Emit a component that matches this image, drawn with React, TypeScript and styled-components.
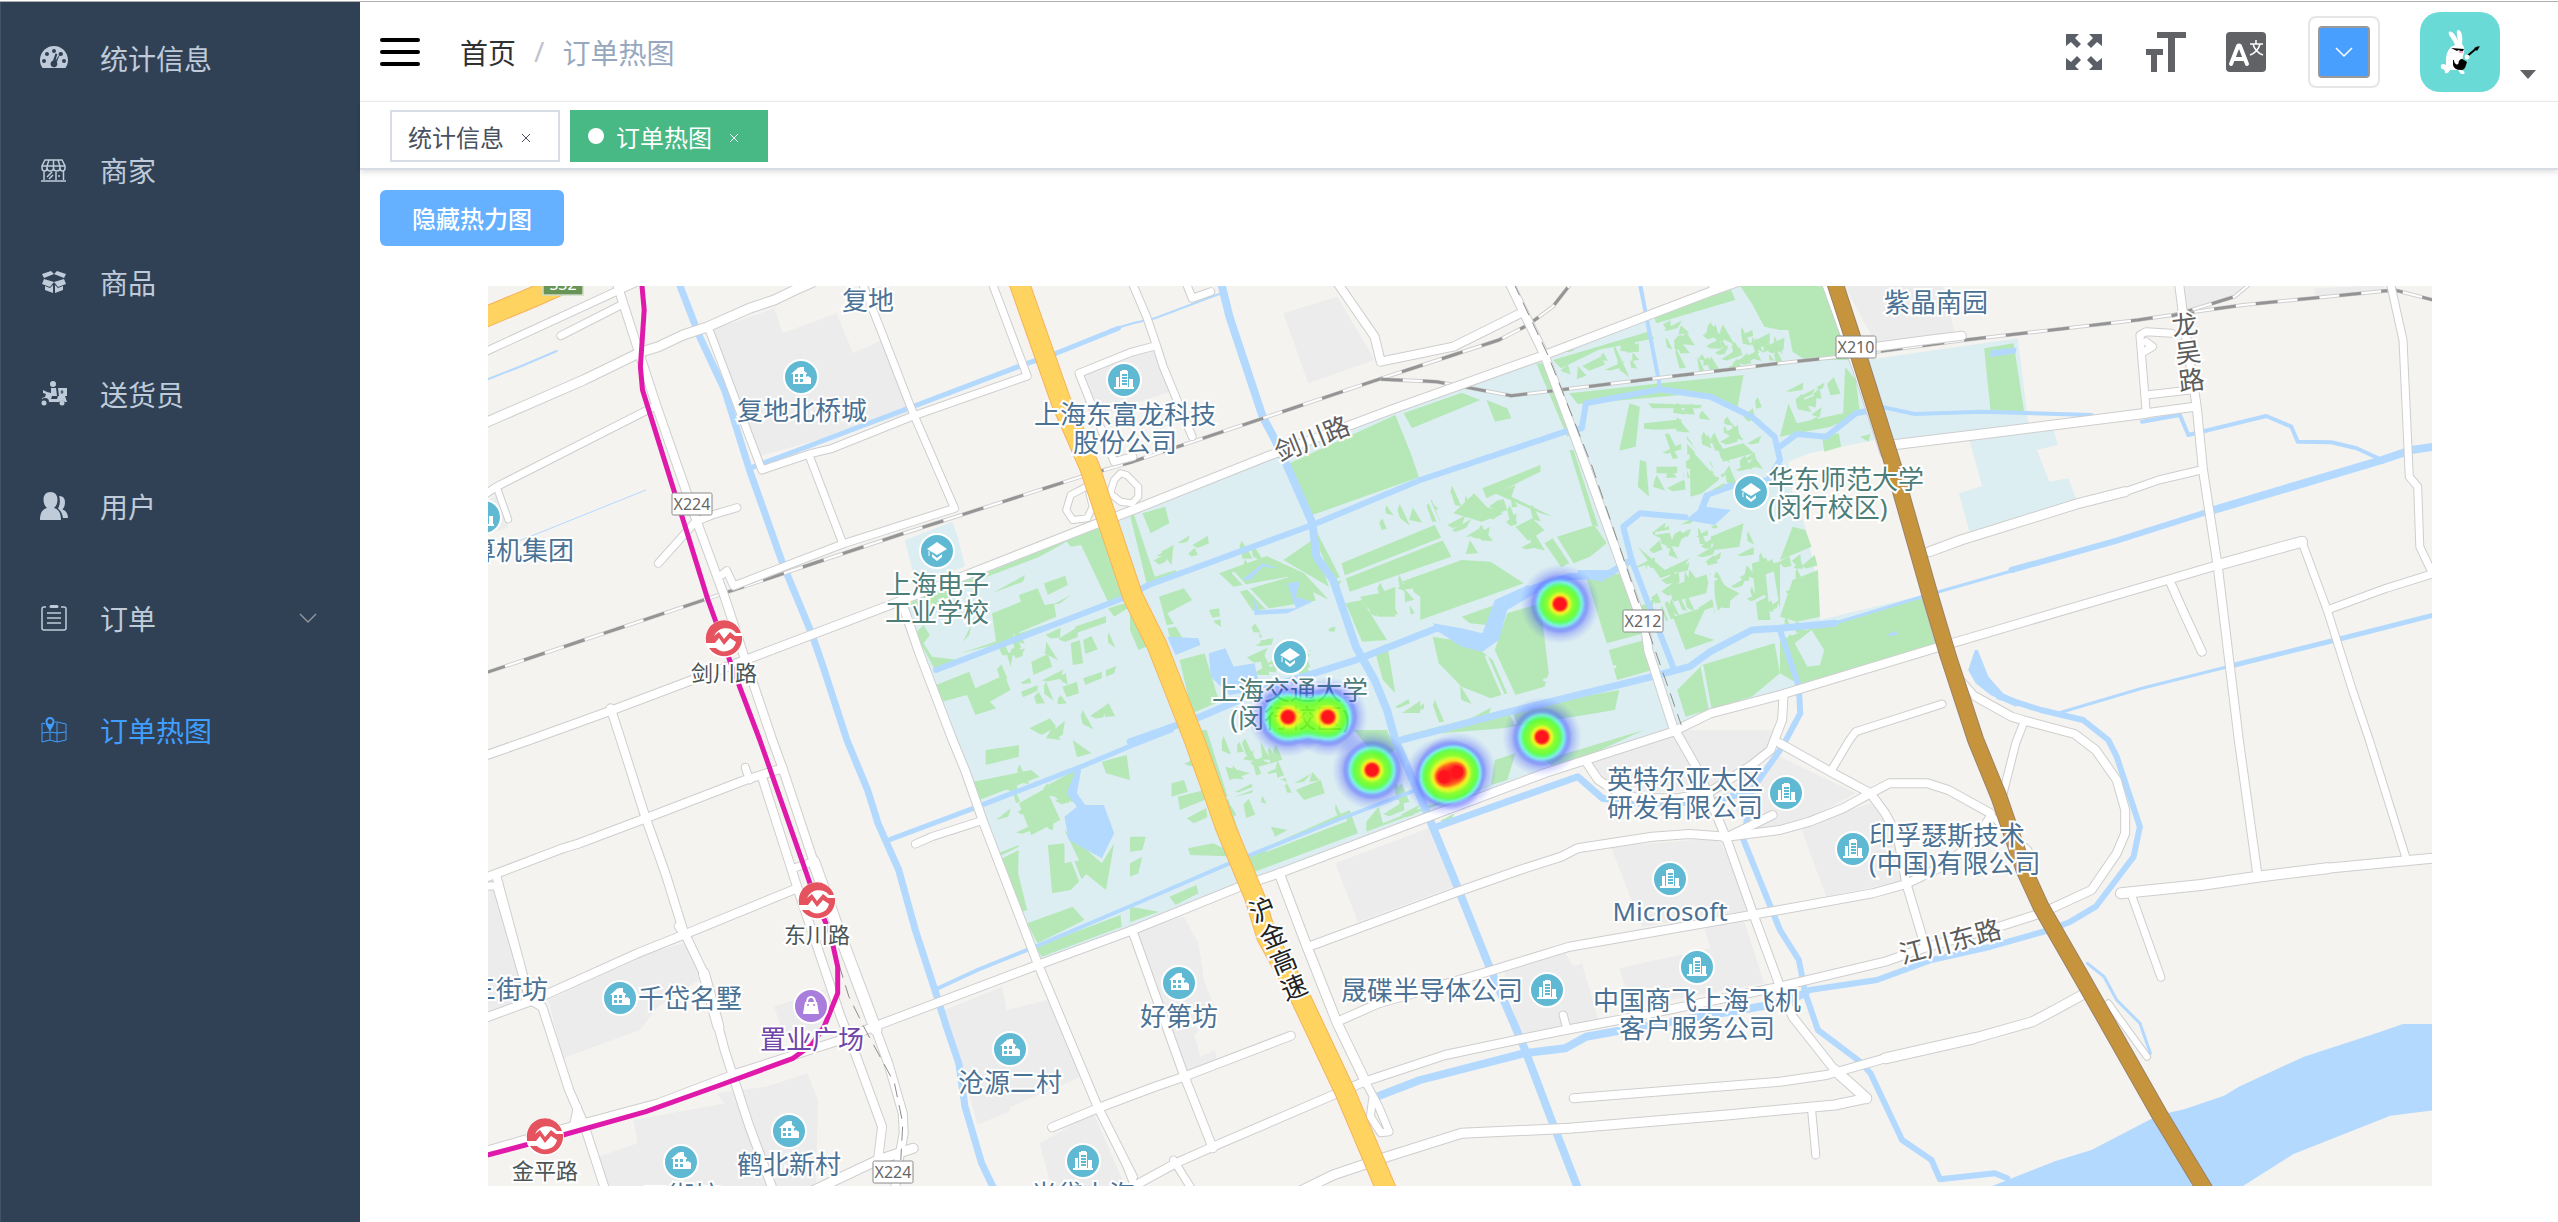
import React from "react";
import styled, { createGlobalStyle, css } from "styled-components";

const GlobalStyle = createGlobalStyle`
  *, *::before, *::after { box-sizing: border-box; }
  body {
    margin: 0;
    background: #fff;
    font-family: "Noto Sans", "Noto Sans CJK SC", sans-serif;
    font-size: 28px;
    color: #303133;
  }
  button { font: inherit; padding: 0; border: 0; background: none; cursor: pointer; }
  a { color: inherit; text-decoration: none; }
`;

/* ---------- frame ---------- */

const Page = styled.div`
  display: grid;
  grid-template-columns: 360px minmax(0, 1fr);
  min-height: 100vh;
  padding-top: 1px;
  background: linear-gradient(#fff 1px, #aeaeae 1px, #aeaeae 2px, #fff 2px);
`;

const Sidebar = styled.nav`
  margin-top: 1px;
  background: #304156;
  border-left: 1px solid #41536b;
`;

const Main = styled.div`
  margin-top: 1px;
  min-width: 0;
`;

const MenuLink = styled.a<{ $active?: boolean }>`
  display: flex;
  align-items: center;
  gap: 32px;
  height: 112px;
  padding: 0 42px 0 39px;
  color: ${(p) => (p.$active ? "#409eff" : "#bfcbd9")};
  > svg { width: 28px; height: 28px; flex: none; }
`;

const MenuText = styled.span`
  flex: 1;
`;

const MenuArrow = styled.svg`
  && { width: 20px; height: 20px; color: #909399; }
`;

/* ---------- header ---------- */

const Header = styled.header`
  display: flex;
  align-items: center;
  height: 100px;
  padding: 0 22px 0 20px;
  border-bottom: 1px solid #f0f0f1;
`;

const Burger = styled.button`
  display: flex;
  width: 40px;
  svg { width: 40px; height: 32px; }
`;

const Crumbs = styled.nav`
  display: flex;
  gap: 18px;
  margin-left: 40px;
  flex: 1;
`;

const Crumb = styled.a`
  color: #303133;
`;

const CrumbSlash = styled.span`
  color: #c0c4cc;
`;

const CrumbHere = styled.span`
  color: #97a8be;
`;

const Tools = styled.div`
  display: flex;
  align-items: center;
  gap: 40px;
`;

const Tool = styled.button`
  display: flex;
  width: 40px;
  height: 40px;
  color: #5a5e66;
  svg { width: 40px; height: 40px; }
`;

const ColorPicker = styled.button`
  display: grid;
  width: 72px;
  height: 72px;
  margin-left: 2px;
  padding: 8px;
  border: 2px solid #e6e6e6;
  border-radius: 8px;
`;

const Swatch = styled.span`
  display: grid;
  place-items: center;
  border: 2px solid #999;
  border-radius: 4px;
  background: #489ffe;
  svg { width: 20px; height: 20px; color: #fff; }
`;

const UserMenu = styled.button`
  display: flex;
  align-items: flex-end;
  gap: 20px;
`;

const Avatar = styled.svg`
  width: 80px;
  height: 80px;
  border-radius: 20px;
  background: #69dad5;
`;

const Caret = styled.span`
  margin-bottom: 13px;
  border: 8px solid transparent;
  border-top: 9px solid #606266;
  border-bottom: 0;
`;

/* ---------- tabs ---------- */

const Tabs = styled.div`
  display: flex;
  gap: 10px;
  height: 68px;
  padding: 8px 30px;
  border-bottom: 2px solid #d8dce5;
  box-shadow: 0 2px 6px rgba(0, 0, 0, 0.14);
`;

const Tab = styled.div<{ $active?: boolean }>`
  display: flex;
  align-items: center;
  height: 52px;
  padding: 0 16px;
  border: 2px solid #d8dce5;
  font-size: 24px;
  color: #495060;
  ${(p) =>
    p.$active &&
    css`
      border-color: #48b884;
      background: #48b884;
      color: #fff;
      &::before {
        content: "";
        width: 16px;
        height: 16px;
        margin-right: 12px;
        border-radius: 50%;
        background: #fff;
      }
    `}
`;

const TabClose = styled.button`
  display: grid;
  place-items: center;
  width: 32px;
  height: 32px;
  margin-top: 4px;
  margin-left: 6px;
  color: inherit;
  svg { width: 10px; height: 10px; }
`;

/* ---------- content ---------- */

const Content = styled.main`
  padding: 20px 20px 36px;
`;

const PrimaryButton = styled.button`
  && {
    display: block;
    height: 56px;
    padding: 0 32px 2px;
    border-radius: 6px;
    background: #66b1ff;
    color: #fff;
    font-size: 24px;
    font-weight: 500;
  }
`;

const MapBox = styled.section`
  position: relative;
  overflow: hidden;
  height: 900px;
  margin: 40px 106px 0 108px;
  background: #f4f3ef;
`;

const MapCanvas = styled.svg`
  display: block;
  width: 100%;
  height: 100%;
`;

const HeatLayer = styled.svg`
  position: absolute;
  inset: 0;
  width: 100%;
  height: 100%;
  pointer-events: none;
`;

type LabelKind = "place" | "school" | "shop" | "metro" | "road" | "highway";

const labelColor: Record<LabelKind, string> = {
  place: "#4b7295",
  school: "#4d7d79",
  shop: "#6f45a8",
  metro: "#4a5555",
  road: "#5d5d5d",
  highway: "#222",
};

const Label = styled.div<{ $x: number; $y: number; $kind: LabelKind; $left?: boolean; $turn?: number; $column?: boolean }>`
  position: absolute;
  left: ${(p) => p.$x - 488}px;
  top: ${(p) => p.$y - 286}px;
  transform: translate(${(p) => (p.$left ? "0" : "-50%")}, -50%) rotate(${(p) => p.$turn ?? 0}deg);
  font-size: ${(p) => (p.$kind === "metro" ? 22 : 26)}px;
  line-height: 28px;
  text-align: ${(p) => (p.$left ? "left" : "center")};
  white-space: pre;
  color: ${(p) => labelColor[p.$kind]};
  -webkit-text-stroke: 4px #fff;
  paint-order: stroke fill;
  ${(p) => p.$column && css`width: 28px; white-space: normal; word-break: break-all;`}
`;

const RoadSign = styled.div<{ $x: number; $y: number; $green?: boolean }>`
  position: absolute;
  left: ${(p) => p.$x - 488}px;
  top: ${(p) => p.$y - 286}px;
  transform: translate(-50%, -50%);
  width: 41px;
  height: 23px;
  border: ${(p) => (p.$green ? "1px solid #fff" : "1px solid #8a8a8a")};
  border-radius: ${(p) => (p.$green ? 0 : 2)}px;
  background: ${(p) => (p.$green ? "#689556" : "#fff")};
  color: ${(p) => (p.$green ? "#fff" : "#666")};
  font-size: 16px;
  line-height: 21px;
  text-align: center;
`;

/* ---------- map geometry ---------- */

// The survey is stored in six sheets. Each point is given in the units of its
// sheet; a letter in a line switches to another sheet.
const sheets: Record<string, [number, number, number]> = {
  a: [480, 280, 650 / 1568],
  b: [1130, 280, 650 / 1568],
  c: [1780, 280, 660 / 1568],
  d: [480, 730, 650 / 1568],
  e: [1130, 730, 650 / 1568],
  f: [1780, 730, 660 / 1568],
};

const trace = (line: string) => {
  let sheet = sheets.a;
  return line
    .split(/\s+/)
    .reduce<string[]>((out, token) => {
      if (sheets[token]) {
        sheet = sheets[token];
        return out;
      }
      const [x, y] = token.split(",").map(Number);
      out.push(`${(sheet[0] + x * sheet[2]).toFixed(1)},${(sheet[1] + y / 3).toFixed(1)}`);
      return out;
    }, [])
    .join(" ");
};

const blocks = [
  "a 560,150 710,85 730,160 860,100 900,220 970,180 1040,400 670,530",
  "a 1450,280 1575,230 b 60,205 110,330 0,375 a 1480,420",
  "b 370,100 500,50 590,240 430,310",
  "c 150,10 385,10 415,160 230,195",
  "c 960,10 1115,10 1080,50 965,95",
  "c 1270,25 1440,16 1430,30 1270,48",
  "a 19,660 50,640 68,740 19,765",
  "d 10,470 40,470 120,810 10,850",
  "d 165,810 380,680 490,640 540,740 430,830 385,900 200,985",
  "d 710,830 860,765 860,800 820,900 730,910",
  "d 570,1090 690,1070 790,1030 815,1110 810,1380 300,1380 285,1280 380,1240 370,1170 590,1120",
  "d 1120,840 1260,770 1270,840 1370,810 1450,1040 1280,1130 1275,1145 1200,1185 1150,950",
  "d 1350,1240 1480,1150 1560,1380 1380,1380",
  "e 10,600 130,560 165,640 180,760 210,850 155,915 170,980 205,960 210,1000 130,1030",
  "e 495,400 720,295 780,470 550,575",
  "e 900,710 1050,670 1070,710 1090,700 1130,870 940,920",
  "e 1160,350 1420,325 1500,540 1235,590",
  "e 1110,95 1310,10 1320,0 1568,0 1500,120 1400,180 1180,190",
  "e 1180,715 1400,655 1385,590 1480,570 1530,760 1210,830",
  "e 1430,190 1568,70 f 0,80 180,190 70,265 0,290 e 1500,305",
  "f 50,295 215,220 250,260 300,450 110,500",
];

const campus = [
  "a 1020,975 1480,735 1575,690 b 1000,230 1490,10 c 110,10 180,270 225,480 70,520 20,545 30,640 60,740 80,850 95,1020 340,945 375,1090 40,1215 b 1568,1240 e 1310,5 0,590 d 1350,690 1210,270 1130,0 a 1140,1380",
  "c 205,240 565,175 590,430 270,480",
  "c 450,480 650,450 660,495 610,510 640,605 685,595 705,660 450,755 425,640 480,618",
  "a 1025,780 1140,725 1152,770 1170,860 1050,905",
];

const lawns = [
  "a 1035,970 1500,740 1560,940 1515,965 1450,795 1425,800 1415,785 1350,830 1150,925 1130,960 1050,1000",
  "a 1235,1000 1305,965 1300,945 1345,925 1362,975 1385,970 1390,1010 1245,1085",
  "a 1050,1060 1070,1035 1085,1065 1070,1090 1090,1130 1155,1140 1100,1175",
  "a 1100,1215 1180,1175 1195,1225 1265,1185 1280,1230 1230,1265 1245,1285 1195,1305 1175,1245 1115,1265",
  "a 1325,1345 1375,1315 1390,1340 1355,1365", "a 1365,1375 1385,1335 1400,1380",
  "a 1330,1145 1370,1122 1380,1160 1335,1185", "a 1425,1090 1447,1080 1455,1150 1430,1155",
  "a 1455,1080 1475,1068 1490,1108 1460,1122", "a 1405,1220 1440,1205 1445,1240 1415,1252",
  "a 1455,1195 1500,1175 1500,1195 1460,1215", "a 1360,910 1412,887 1418,915 1370,945",
  "a 1435,1040 1510,1008 1510,1028 1440,1058", "a 1160,1120 1420,1010 1410,1025 1240,1095",
  "a 1235,940 1315,885 1310,905", "a 1165,1085 1185,1035 1180,1065", "a 1270,1120 1315,1105 1305,1130 1285,1125 1280,1160",
  "a 1305,1235 1345,1215 1345,1232 1310,1252", "a 1510,1170 1535,1158 1530,1180 1510,1190", "a 1380,975 1425,945 1400,970",
  "a 1515,985 1568,965 1568,980 1530,1010",
  "b 385,550 640,405 700,590 440,705", "b 660,400 800,338 845,360 680,445",
  "b 510,850 735,735 775,830 530,935", "b 655,905 800,840 870,845 950,910 700,1020 700,940",
  "b 730,1070 780,1080 850,1115 875,1140 910,1240 870,1255 800,1220 745,1150",
  "b 910,1000 990,970 1010,1180 1000,1220 930,1245 880,1110",
  "b 1100,890 1190,880 1240,1060 1150,1090", "b 1155,1110 1240,1080 1260,1170 1175,1200",
  "b 1320,1230 1380,1155 1500,1110 1555,1090 1568,1180 1500,1250 1340,1310",
  "b 650,1370 900,1290 1180,1230 1170,1290 900,1345", "b 1030,770 1120,735 1150,790 1110,830 1070,850",
  "b 1020,240 1250,155 1265,175 1130,210 1040,265", "b 1260,100 1450,30 1460,60 1270,130",
  "b 1470,15 1568,15 1568,150 1530,140 1500,70", "c 0,10 110,10 170,240 60,240 30,215 20,150 0,150",
  "b 1060,340 1280,310 1480,285 1465,385 1380,340 1080,372", "b 980,250 995,250 1070,455 1055,470",
  "b 1060,510 1070,510 1130,740 1115,735", "b 265,935 400,885 440,930 450,970 300,1000",
  "b 70,950 130,925 150,960 90,1000 130,1080 100,1090", "b 215,880 330,828 420,880 480,960 440,935 380,890 250,920",
  "b 370,840 440,780 480,920", "b 120,1140 180,1120 215,1265 150,1300", "b 860,360 910,385 920,415 880,425",
  "b 850,625 990,555 990,575 860,655", "b 930,740 970,715 1000,750 960,782", "b 820,780 840,820 810,822",
  "b 1000,790 1020,775 1060,850 1040,862", "b 0,705 10,705 60,890 110,870 115,890 40,910",
  "b 30,700 85,680 95,730 50,760", "b 0,960 40,1100 20,1110 0,1050", "b 555,950 600,940 640,920 640,1010 600,1010 570,980",
  "b 800,1010 880,975 860,1035 820,1030", "b 75,815 105,795 100,855", "b 190,990 215,985 220,1040 205,1030",
  "b 1205,370 1230,380 1220,500 1180,512", "b 1240,430 1330,418 1330,445 1240,452",
  "b 1350,505 1420,600 1380,640 1352,650", "b 1230,540 1245,545 1252,650 1225,620",
  "b 1420,510 1480,490 1505,520 1430,545", "b 1225,800 1290,870 1350,835 1330,870 1280,895",
  "b 1300,920 1400,880 1390,940 1310,965", "b 1310,1010 1390,980 1360,1060 1410,1080 1340,1110",
  "b 1410,900 1470,940 1410,1000", "b 1500,850 1530,840 1545,1020 1515,1020", "b 1250,370 1380,375 1375,385 1260,385",
  "b 1270,560 1320,560 1320,580 1270,580", "b 1400,770 1480,730 1470,800 1410,810", "b 1550,850 1568,845 1568,990",
  "b 780,700 830,640 860,680 900,700 860,730", "b 880,640 930,615 920,650 1020,710 990,700",
  "b 520,970 560,960 620,1080 560,1085", "b 440,730 510,900 500,930 440,760", "b 590,1110 620,1090 640,1240 610,1200",
  "c 485,205 555,190 580,395 500,390", "c 85,1040 345,950 375,1090 45,1213 0,1180 0,1080",
  "c 0,1010 30,900 90,870 95,1010 40,1025", "c 30,740 60,750 75,800 0,840",
  "c 20,370 40,430 150,400 155,260 180,300 190,400 120,440 0,470", "c 100,470 140,460 145,500 105,515", "c 190,470 215,462 210,485",
  "d 1190,155 1330,120 1350,140 1205,210", "d 1300,220 1365,175 1400,270 1330,315",
  "d 1250,370 1300,345 1298,430 1320,540 1308,545", "d 1370,345 1410,340 1410,400 1450,390 1465,430 1425,480 1380,490",
  "d 1410,300 1500,400 1530,340 1510,480 1460,430", "d 1320,580 1430,530 1458,570 1345,640",
  "d 1340,650 1545,555 1548,590 1355,680", "d 1370,165 1450,110 1420,220 1390,205", "d 1430,30 1475,70 1440,82",
  "d 1500,95 1560,75 1568,150 1510,130", "d 1220,60 1300,45 1300,80 1220,105", "d 1245,270 1280,235 1275,260",
  "e 285,375 530,240 550,310 300,425", "e 570,275 600,230 610,280 690,240 950,130 870,165 570,305",
  "e 880,90 930,70 910,150 870,165", "e 1000,90 1240,0 1030,120", "e 95,500 160,465 165,490 110,525",
  "e 0,530 70,545 0,577", "e 115,200 180,180 180,210 120,240", "e 100,160 130,150 140,185 100,200",
  "e 140,355 200,340 270,380 145,375", "e 165,0 185,0 268,330 255,335", "e 230,110 290,130 240,150",
  "e 300,85 340,100 310,110", "e 0,320 38,320 30,360 0,365", "e 0,400 30,380 20,430 0,440",
  "e 340,290 380,300 350,320", "e 400,180 460,150 470,190 420,210", "e 540,0 620,0 640,60 600,90",
];

const walks = [
  "b 645,380 700,590", "b 500,900 870,720", "b 700,600 780,830 860,830 1000,930", "b 250,880 480,1180",
  "b 40,1050 480,960", "b 300,1080 520,1030", "b 860,1130 930,1330", "b 1250,860 1350,1170", "b 1390,860 1420,1020 1530,950",
  "b 1230,450 1330,460 1350,700", "b 1340,480 1460,640", "b 1480,640 1530,830", "b 1000,1200 1170,1160", "b 1270,760 1568,700",
  "b 1380,1160 1400,1290", "a 1250,1110 1300,1240 1330,1380", "d 1260,380 1470,250", "d 1400,300 1470,520", "e 200,220 480,90", "e 330,360 520,270",
];

const water: [number, string][] = [
  [7, "a 480,10 530,170 590,330 650,570 730,850 800,1060 825,1150 885,1380 d 935,180 960,280 1010,420 1050,600 1100,790 1125,890 1155,1000 1170,1130 1210,1300 1245,1390"],
  [5, "a 650,565 800,495 1320,250 1390,220 1540,145"],
  [2, "a 1520,150 1575,130 b 60,115 220,40"],
  [2, "a 10,302 100,258 185,213"],
  [1, "a 90,785 400,630"],
  [8, "b 220,10 240,110 320,410 350,480 380,560 440,730 450,830 490,900 545,1100 590,1200 620,1290 640,1380 e 700,200 780,440 870,720 950,950 1020,1180 1085,1390"],
  [6, "a 1100,1170 1560,950 b 45,915 440,735 700,600 1050,455 1090,445 1100,370 1280,328 1400,350 1500,410 1555,470 1568,540 1540,600 1440,620"],
  [6, "b 1340,712 1230,700 1190,740 1210,840 1250,970 1310,1160"],
  [4, "b 1230,10 1280,330"],
  [7, "b 0,1385 170,1310 330,1225 545,1140 740,1045 800,1060 850,1090 890,980 960,930 1060,890 1150,885 1210,840"],
  [5, "d 990,328 1190,235 1450,110 1575,45 e 100,0"],
  [4, "d 1105,775 1200,720 1330,655 1575,525 e 240,400 300,370 500,270 680,185"],
  [7, "b 640,1385 900,1300 1260,1190 1350,1160 1400,1115 1500,1050 1568,1045 c 130,1030"],
  [3, "c 130,1030 350,945 600,855"],
  [6, "c 550,870 800,782 1030,690"],
  [8, "c 1030,690 1430,540 1500,510 1570,497"],
  [6, "c 0,1050 45,1220 48,1300 10,1390 e 1568,60 1500,180 1480,330 1568,600 f 45,690 60,790 90,900 190,995 215,1030 290,1230 360,1290 380,1348 510,1330 540,1345"],
  [7, "e 740,290 1080,140 1140,205 1230,220 1400,215 1480,190"],
  [6, "c 520,1250 620,1290 720,1320 780,1380 f 800,80 855,290 840,380 750,530 690,575 640,600 500,650 360,690 230,750 70,780"],
  [3, "c 660,1300 860,1225 1080,1155"],
  [5, "c 1080,1155 1320,1080 1570,1000"],
  [8, "e 595,1100 700,1050 950,970 1050,955 1100,920 1190,900 1568,820 f 60,790"],
  [4, "c 240,380 320,402 480,395 740,405"],
  [4, "c 860,425 950,405 970,465 1155,408 1215,440 1230,485 1310,487 1370,505 1430,540"],
  [6, "c 0,500 40,462 110,470 180,400 240,385"],
  [3, "f 730,700 770,740 800,810 855,880 880,970"],
];

const lakes = [
  "b 1340,720 1370,690 1385,640 1450,612 1460,625 1400,650 1390,680 1450,690 1410,735",
  "b 730,1030 800,1045 850,1060 880,960 960,915 985,935 910,990 890,1080 850,1115 800,1100 750,1060",
  "b 90,1070 165,1075 170,1095 110,1125", "b 190,1120 230,1105 250,1160 300,1150 315,1230 240,1245 195,1190",
  "b 270,900 320,850 360,865 320,860 290,900", "b 300,950 310,990 400,985 380,910 410,905 400,950 440,965 380,1000 300,1005",
  "d 1440,110 1425,160 1415,190 1440,230 1410,260 1420,330 1500,385 1530,310 1505,225 1460,225 1440,190 1450,120",
  "c 500,210 562,203 560,220 500,232", "c 463,1110 470,1110 495,1190 530,1240 580,1270 560,1280 500,1245 465,1210 447,1170",
  "f 1570,882 1480,882 1420,908 1245,980 1090,1070 1055,1097 960,1138 900,1155 740,1260 655,1293 500,1370 480,1380 1085,1380 1220,1272 1450,1157 1570,1138",
  "b 1080,870 1155,870 1140,905 1080,890", "c 255,1062 280,1053 280,1065 258,1068",
];

const roads: [number, string][] = [
  [7, "a 10,217 340,28 375,8"], [7, "a 195,167 345,72"],
  [8, "a 330,10 383,215 425,375 520,715 590,950 640,1140 705,1380 d 730,115 805,395"],
  [11, "d 805,395 870,620 955,900"], [8, "d 955,900 985,1000 1020,1150 1022,1210 1010,1290 1000,1390"],
  [9, "a 10,430 250,300 390,215 430,200 490,165 550,140 650,85 710,60 760,30 800,8"],
  [7, "a 10,645 40,620 420,380"], [6, "a 40,620 68,718"], [7, "a 430,850 520,725 560,705 620,683"],
  [7, "a 550,140 680,570 800,520 850,505 1040,410 1320,288 1235,8"],
  [7, "a 922,8 970,160 1045,400 1145,685 880,790 612,918 595,872 583,885"], [7, "a 795,530 875,790"],
  [8, "d 10,78 120,30 a 320,1290 640,1140 1000,970 1480,735 1575,690 b 340,525 640,385 1000,225 1400,35 1480,0"],
  [8, "a 315,1285 340,1380 d 400,265 430,370 450,440 490,600 540,730"], [10, "d 540,730 575,890"],
  [8, "d 575,890 590,960 650,1190 710,1390"],
  [8, "a 1020,975 1060,1120 1140,1380 d 1170,120 1215,280 1345,700 1490,1130 1575,1340"],
  [8, "d 10,445 200,355 240,340 400,265 640,150 730,115"], [7, "d 640,112 650,150"],
  [8, "d 680,140 770,490 870,860 905,970 970,1190 960,1290"], [7, "d 755,415 805,395"],
  [8, "d 10,865 130,810 380,670 500,610 765,475"],
  [8, "d 40,440 120,810 150,830 215,1080 250,1180 305,1390"], [7, "d 10,468 40,468 120,810"], [7, "d 478,588 495,620"], [7, "d 235,1130 225,1190"],
  [8, "d 10,1265 160,1210 250,1180 430,1120 620,1030 870,930 950,890 1345,705 1575,600 e 265,470 360,430 720,260 1000,130 1310,5 b 1400,1300 1568,1245 c 380,1100 920,900 1040,855"],
  [10, "c 1040,855 1240,785"],
  [9, "d 790,1390 960,1290 1045,1255"], [7, "d 1050,342 1090,320 1210,272"],
  [8, "d 1380,1192 1490,1135 1575,1095 e 60,1070 130,1040 388,917"], [8, "e 5,600 130,1035 200,1255"],
  [8, "e 10,1368 110,1300 200,1250 490,1095 565,1055 760,975 950,925 1050,900 1200,865 1568,770 f 250,695 340,655 520,590 620,550 740,480 800,370 820,310 820,240 800,150 750,60 700,12 c 590,1325 550,1310 465,1250"],
  [7, "e 105,1290 155,1390"], [7, "e -10,1300 10,1365"], [9, "e 360,430 430,660 500,880 570,1060"],
  [7, "e 570,1060 600,1130 625,1205 605,1208 580,1160 585,1110"],
  [8, "e 430,650 780,490 940,420 1040,380 1080,355 1260,320 1350,312 1440,320 1568,300 f 70,275 150,235 215,190 260,160 350,160 400,180 500,250"],
  [8, "e 500,875 600,820 850,730 1060,650 1568,540 f 220,490 300,462 400,400 470,320 500,260"],
  [8, "e 1315,0 1370,120 1440,330 1500,540 1565,760 f 30,860 130,1020"], [10, "f 130,1020 205,1105"],
  [8, "b 915,8 1000,225 1100,560 1245,1060 1250,1110 1310,1340"],
  [8, "e 1100,95 1130,150 1180,190 1230,205 1320,205 1400,185 1500,105 1545,60 c 5,1320 8,1255"],
  [8, "e 1435,325 1550,255"],
  [9, "e 400,1390 490,1335 620,1280 800,1210 1060,1195 1440,1155 1568,1140 f 130,1125 205,1105"],
  [8, "e 1070,1105 1568,1055 f 110,1035 250,985"], [10, "f 250,985 460,925"], [9, "f 460,925 600,875 660,835 725,790"], [7, "f 75,1140 85,1275"],
  [7, "e 1045,855 1055,900"], [7, "c 385,1272 180,1355 f 165,30 120,125"],
  [8, "f 0,40 120,125 215,190 250,250 280,320 300,460 345,650"], [7, "c 580,1325 560,1390 f 530,190"],
  [5, "c 105,8 180,270 245,520"], [6, "c 345,950 380,1100 410,1170 465,1250"], [6, "f 500,255 590,360"], [6, "f 640,600 700,730"], [6, "f 780,820 872,980"],
  [8, "c 230,200 350,180 432,167"], [9, "c 265,495 480,462 870,400"], [8, "c 870,400 985,380"],
  [9, "c 355,815 430,780 520,745 710,670 820,635"], [7, "c 820,635 900,600 1000,570"],
  [8, "c 948,8 960,130 990,380 1005,570 1040,860 1090,1380 f 1135,440"],
  [7, "c 930,160 870,155 855,165 870,395"], [7, "c 870,185 885,200 865,215"], [7, "c 870,345 975,330"],
  [7, "c 1240,785 1300,990 1360,1230 1400,1380 f 1490,395"], [8, "c 925,900 960,1000 1002,1115"],
  [7, "c 1450,8 1480,180 1495,590 1515,620 1520,800 1550,880"], [7, "c 1300,990 1440,925 1570,874"],
  [10, "f 810,490 1000,465 1135,440 1300,415"], [9, "f 1300,415 1570,382"], [7, "f 835,495 905,742"],
  [7, "b 5,8 40,110 65,200 80,260 150,470"], [7, "b 60,198 0,218 a 1445,280 1530,545 1575,530"],
  [8, "b 500,8 590,170 605,245 780,200 945,98"], [7, "b 135,8 150,55 195,35"], [6, "b 1405,8 1405,35"],
  [6, "a 1460,622 1425,645 1414,690 1430,720 1465,715 1478,680 1470,640"],
  [6, "a 1520,640 1530,600 1545,580 1560,585 b 20,620 20,650 5,670 a 1545,665 1525,645"],
];

const rails = [
  "a 10,1180 600,935 1010,765 1450,590 1575,545 b 320,415 600,298 780,225 890,180 960,135 1020,80 1065,8",
  "b 605,298 740,305 920,347 1050,328 1568,250 c 140,230 440,180 850,120 960,100 1100,75 1460,30 1570,66",
  "c 930,108 1080,50 1120,8",
];
const thinRails = ["b 925,8 1008,225 1115,560 1230,980 1330,1335", "d 850,640 890,800 930,900 1000,1060 1020,1180 1015,1290"];

const highway = "a 1298,0 1400,360 1470,560 1575,950 b 65,1095 155,1380 e 210,220 230,290 300,500 330,620 410,800 520,1090 622,1390";
const expressway = "a 0,118 130,50 230,-5";
const countyRoad = "c 128,0 190,240 270,560 360,960 400,1130 465,1380 f 520,200 580,420 620,530 720,750 900,1150 1015,1390";
const metroLine = "a 390,8 396,90 387,260 392,330 470,640 550,960 585,1080 605,1150 675,1380 d 810,510 845,610 863,710 863,790 830,890 800,945 755,985 580,1065 400,1145 200,1215 10,1278";

// Small lawns between the campus buildings: areas as x, y, width, height, count.
const gardens: [number, number, number, number, number][] = [
  [1668, 325, 110, 42, 40], [1560, 345, 80, 30, 14], [1650, 400, 110, 90, 34], [1645, 520, 130, 100, 48],
  [1445, 490, 100, 60, 18], [1250, 620, 85, 55, 18], [1370, 580, 55, 40, 10], [1185, 745, 130, 80, 26],
  [990, 630, 130, 100, 22], [1010, 770, 90, 110, 14], [1160, 510, 100, 60, 8], [1370, 505, 70, 30, 6],
  [1785, 385, 50, 50, 10], [1785, 550, 25, 90, 12], [1330, 790, 120, 30, 8], [1400, 690, 110, 30, 6],
];

const gardenShapes = (() => {
  let seed = 11;
  const rnd = () => ((seed = (seed * 16807) % 2147483647) - 1) / 2147483646;
  return gardens.flatMap(([x, y, w, h, n]) =>
    Array.from({ length: n }, () => {
      const cx = x + rnd() * w;
      const cy = y + rnd() * h;
      const long = 4 + rnd() * 8;
      const wide = 2 + rnd() * 4;
      const turn = rnd() < 0.5 ? -0.42 : 1.2;
      const corner = (u: number, v: number) =>
        `${(cx + u * Math.cos(turn) - v * Math.sin(turn)).toFixed(1)},${(cy + u * Math.sin(turn) + v * Math.cos(turn)).toFixed(1)}`;
      return [corner(-long, -wide * rnd()), corner(long, -wide), corner(long * rnd(), wide), corner(-long * 0.6, wide * rnd())].join(" ");
    })
  );
})();

const orders = [[1560, 604], [1288, 717], [1328, 717], [1372, 770], [1444, 777], [1457, 772], [1542, 737]];

const Line = ({ pts, w, color, dash, butt }: { pts: string; w: number; color: string; dash?: string; butt?: boolean }) => (
  <polyline points={trace(pts)} fill="none" stroke={color} strokeWidth={w} strokeDasharray={dash} strokeLinecap={butt ? "butt" : "round"} strokeLinejoin="round" />
);

const house = <><path d="M-10-3-2-10l1 1V-10H3V-6L6-4V-3H5V0L7-1l3 2V7H-8V-3z" fill="#fff" /><path d="M-6-3h3v3h-3zM-1-3h3v3h-3zM-6 2h3v3h-3zM-1 2h3v3h-3z" fill="#5fb9d3" /></>;
const tower = <><path d="M-4-9h8V8h-8zM-8-3h3V8h-3zM5-1h4v9H5zM-10 7H10v2H-10zM-2-10h5v2h-5z" fill="#fff" /><path d="M-2-6h5v2h-5zM-2-3h5v2h-5zM-2 0h5v2h-5zM-2 3h5v2h-5z" fill="#5fb9d3" /></>;
const cap = <><path d="M0-9 10-2 0 4-10-2zM-5 3v3l5 4 5-4V3L0 7z" fill="#fff" /><path d="M-8 0v5" stroke="#fff" strokeWidth="1" /></>;
const bag = <><path d="M-6-4H6L8 8H-8z" fill="#fff" /><path d="M-4-3c0-8 8-8 8 0" fill="none" stroke="#fff" strokeWidth="2" /><circle cx="-3" cy="-1" r="1" fill="#a87ddb" /><circle cx="3" cy="-1" r="1" fill="#a87ddb" /></>;

const pins: [number, number, React.ReactNode, string?][] = [
  [801, 377, house], [620, 998, house], [1010, 1049, house], [789, 1131, house], [681, 1162, house], [1179, 983, house],
  [1124, 380, tower], [1083, 1161, tower], [1547, 990, tower], [1670, 879, tower], [1786, 793, tower], [1853, 849, tower], [1697, 967, tower], [484, 517, tower],
  [937, 551, cap], [1290, 657, cap], [1751, 492, cap], [811, 1006, bag, "#a87ddb"],
];
const stations = [[724, 639], [817, 901], [545, 1137]];

const labels: { x: number; y: number; text: string; kind: LabelKind; left?: boolean; turn?: number; column?: boolean }[] = [
  { x: 868, y: 300, text: "复地", kind: "place" },
  { x: 802, y: 410, text: "复地北桥城", kind: "place" },
  { x: 1125, y: 428, text: "上海东富龙科技\n股份公司", kind: "place" },
  { x: 1312, y: 438, text: "剑川路", kind: "road", turn: -22 },
  { x: 1768, y: 493, text: "华东师范大学\n(闵行校区)", kind: "school", left: true },
  { x: 1936, y: 302, text: "紫晶南园", kind: "place" },
  { x: 2188, y: 352, text: "龙吴路", kind: "road", turn: -7, column: true },
  { x: 522, y: 550, text: "算机集团", kind: "place" },
  { x: 937, y: 598, text: "上海电子\n工业学校", kind: "school" },
  { x: 724, y: 672, text: "剑川路", kind: "metro" },
  { x: 817, y: 934, text: "东川路", kind: "metro" },
  { x: 545, y: 1170, text: "金平路", kind: "metro" },
  { x: 1290, y: 704, text: "上海交通大学\n(闵行校区)", kind: "school" },
  { x: 509, y: 989, text: "三街坊", kind: "place" },
  { x: 690, y: 998, text: "千岱名墅", kind: "place" },
  { x: 812, y: 1039, text: "置业广场", kind: "shop" },
  { x: 1010, y: 1082, text: "沧源二村", kind: "place" },
  { x: 789, y: 1164, text: "鹤北新村", kind: "place" },
  { x: 681, y: 1195, text: "二街坊", kind: "place" },
  { x: 1083, y: 1194, text: "光贷上海", kind: "place" },
  { x: 1179, y: 1016, text: "好第坊", kind: "place" },
  { x: 1278, y: 948, text: "沪金高速", kind: "highway", turn: -22, column: true },
  { x: 1432, y: 990, text: "晟碟半导体公司", kind: "place" },
  { x: 1670, y: 911, text: "Microsoft", kind: "place" },
  { x: 1685, y: 793, text: "英特尔亚太区\n研发有限公司", kind: "place" },
  { x: 1869, y: 849, text: "印孚瑟斯技术\n(中国)有限公司", kind: "place", left: true },
  { x: 1697, y: 1014, text: "中国商飞上海飞机\n客户服务公司", kind: "place" },
  { x: 1950, y: 941, text: "江川东路", kind: "road", turn: -15 },
];

const heatR = "0.15 0.15 0.15 0.15 0.15 0.15 0.2 0.25 0.35 0.4 0.3 0.3 0.35 0.4 0.45 0.5 0.7 0.9 1 1 1";
const heatG = "0.2 0.2 0.2 0.2 0.2 0.2 0.3 0.5 0.8 0.95 1 1 1 1 1 1 1 0.97 0.85 0.4 0.08";
const heatB = "1 1 1 1 1 1 1 1 0.95 0.8 0.5 0.3 0.15 0.1 0.1 0.1 0.1 0.1 0.1 0.1 0.12";
const heatA = "0 0.06 0.13 0.22 0.32 0.42 0.5 0.58 0.68 0.78 0.82 0.84 0.85 0.86 0.87 0.88 0.9 0.93 0.96 0.98 1";

function HeatMap() {
  return (
    <MapBox aria-label="订单热图">
      <MapCanvas viewBox="488 286 1944 900" preserveAspectRatio="xMinYMin slice">
        {blocks.map((p) => <polygon key={p} points={trace(p)} fill="#ececec" />)}
        {campus.map((p) => <polygon key={p} points={trace(p)} fill="#dceef2" />)}
        {lawns.map((p) => <polygon key={p} points={trace(p)} fill="#b6e8b7" />)}
        {gardenShapes.map((p) => <polygon key={p} points={p} fill="#b6e8b7" />)}
        {walks.map((p) => <Line key={p} pts={p} w={3} color="#dceef2" />)}
        <polygon points={trace("c 35,1090 75,1050 105,1110 95,1155 65,1160")} fill="#dceef2" />
        {water.map(([w, p]) => <Line key={p} pts={p} w={w} color="#b3d9ff" />)}
        {lakes.map((p) => <polygon key={p} points={trace(p)} fill="#b3d9ff" />)}
        {rails.map((p) => (
          <g key={p}>
            <Line pts={p} w={4} color="#cfcfcf" butt />
            <Line pts={p} w={2} color="#fff" butt />
            <Line pts={p} w={3} color="#949494" dash="22 20" butt />
          </g>
        ))}
        {roads.map(([w, p]) => <Line key={p} pts={p} w={w + 2} color="#cecece" />)}
        {roads.map(([w, p]) => <Line key={p} pts={p} w={w} color="#fff" />)}
        {thinRails.map((p) => <Line key={p} pts={p} w={1} color="#8c8c8c" dash="14 8" butt />)}
        <Line pts={countyRoad} w={17} color="#9b8265" />
        <Line pts={countyRoad} w={15} color="#c7943e" />
        {[expressway, highway].map((p) => <Line key={p} pts={p} w={21} color="#f5b45c" />)}
        {[expressway, highway].map((p) => <Line key={p} pts={p} w={19} color="#ffd35f" />)}
        <Line pts={metroLine} w={5} color="#df1aab" />
        {pins.map(([x, y, icon, color]) => (
          <g key={`${x}-${y}`} transform={`translate(${x} ${y})`}>
            <circle r="17" fill={color ?? "#5fb9d3"} stroke="#fff" strokeWidth="2" />
            {icon}
          </g>
        ))}
        {stations.map(([x, y]) => (
          <g key={x} transform={`translate(${x} ${y})`}>
            <circle r="19" fill="#fff" />
            <path d="M-18 2A18 18 0 0 1 17-6H12A13 13 0 0 0-10-3L-5-7 0 0 6-7 11-3H18A18 18 0 0 1-15 9H-8A12 12 0 0 0 12 3L6-1 0 6-5-1-9 4H-18z" fill="#e5535f" />
          </g>
        ))}
      </MapCanvas>
      {labels.map((l) => (
        <Label key={`${l.x}-${l.y}`} $x={l.x} $y={l.y} $kind={l.kind} $left={l.left} $turn={l.turn} $column={l.column}>{l.text}</Label>
      ))}
      <RoadSign $x={692} $y={504}>X224</RoadSign>
      <RoadSign $x={1856} $y={347}>X210</RoadSign>
      <RoadSign $x={1643} $y={621}>X212</RoadSign>
      <RoadSign $x={893} $y={1172}>X224</RoadSign>
      <RoadSign $x={563} $y={284} $green>S32</RoadSign>
      <HeatLayer viewBox="488 286 1944 900" preserveAspectRatio="xMinYMin slice">
        <defs>
          <radialGradient id="spot">
            <stop offset="0.14" stopColor="#000" />
            <stop offset="0.5" stopColor="#000" stopOpacity="0.5" />
            <stop offset="0.75" stopColor="#000" stopOpacity="0.18" />
            <stop offset="1" stopColor="#000" stopOpacity="0" />
          </radialGradient>
          <filter id="heat" x="1200" y="520" width="480" height="360" filterUnits="userSpaceOnUse" colorInterpolationFilters="sRGB">
            <feColorMatrix values="0 0 0 1 0  0 0 0 1 0  0 0 0 1 0  0 0 0 1 0" />
            <feComponentTransfer>
              <feFuncR type="table" tableValues={heatR} />
              <feFuncG type="table" tableValues={heatG} />
              <feFuncB type="table" tableValues={heatB} />
              <feFuncA type="table" tableValues={heatA} />
            </feComponentTransfer>
          </filter>
        </defs>
        <g filter="url(#heat)">
          {orders.map(([x, y]) => <circle key={`${x}-${y}`} cx={x} cy={y} r="40" fill="url(#spot)" />)}
        </g>
      </HeatLayer>
    </MapBox>
  );
}

/* ---------- menu icons ---------- */

const icons = {
  dashboard: (
    <svg viewBox="0 0 28 28"><path fill="currentColor" fillRule="evenodd" d="M14 2C6.300 2 0 8.300 0 16c0 3 1 6 2.600 8h22.800c1.600-2 2.600-5 2.600-8C28 8.300 21.700 2 14 2zM14 5a2 2 0 1 1 0 4 2 2 0 0 1 0-4zM7 8a2 2 0 1 1 0 4 2 2 0 0 1 0-4zM21 8a2 2 0 0 1 0 4q-1 0-1.500-.6L16.800 18A3.400 3.400 0 1 1 13 16.600L15.500 9.500l1.800.6L15.500 16.700 19 11.200A2 2 0 0 1 21 8zM4 15a2 2 0 1 1 0 4 2 2 0 0 1 0-4zM24 15a2 2 0 1 1 0 4 2 2 0 0 1 0-4z" /></svg>
  ),
  store: (
    <svg viewBox="0 0 28 28" fill="none" stroke="currentColor" strokeWidth="1.500"><path d="M5 4h17l3 6v2c0 4-5 4-5 0 0 4-6.500 4-6.500 0 0 4-6.500 4-6.500 0 0 4-5 4-5 0v-2zM2 10h23M9 4l-2 6v2M13.500 4v8M18 4l2 6v2M4 15v9M23.500 15v9M16 16v8M1 25h25M7 21l5-5M9 23l4-4M19 19v2" /></svg>
  ),
  goods: (
    <svg viewBox="0 0 28 28" fill="currentColor"><path d="M2 6l9-3 3 3-10 4zM26 6l-9-3-3 3 10 4zM4 11l10 3-4 5-8-3zM24 11l-10 3 4 5 8-3zM5 18l5 2 3-3v8l-8-3zM23 18l-5 2-3-3v8l8-3z" /></svg>
  ),
  delivery: (
    <svg viewBox="0 0 28 28" fill="currentColor"><circle cx="13" cy="4" r="3" /><path d="M11 8h5l1 8h-5l-1 3h6l1-3h7l2 6h-2a4 4 0 0 0-6 0H9a4 4 0 0 0-8 0l1-4 3-1 1-3-3-1v-3l4 2 4 1zM18 8h9v8h-8z" /><circle cx="4" cy="23" r="2.500" /><circle cx="22" cy="23" r="2.500" /><path d="M22 10v4M20.500 12h3" stroke="#304156" /></svg>
  ),
  users: (
    <svg viewBox="0 0 28 28" fill="currentColor"><path d="M10.500 0c4.500 0 7 3 7 7.500 0 4-1.500 7-3.500 8.500 4 1 7 4 7 12H0c0-8 3-11 7-12C5 14.500 3.500 11.500 3.500 7.500 3.500 3 6 0 10.500 0zM19 4c5 0 6 3 6 6.500 0 3-1 5-2.500 7 3 1 5.500 3.500 5.500 8.500h-5c-.5-4-2-7-5-9.500C20 13 20.500 8 19 4z" /></svg>
  ),
  order: (
    <svg viewBox="0 0 28 28" fill="none" stroke="currentColor" strokeWidth="1.500"><path d="M6 3H4Q2 3 2 5v19q0 2 2 2h20q2 0 2-2V5q0-2-2-2h-3M7 9h14M7 14h14M7 19h14" /><path d="M11 2.500h6" strokeWidth="3" strokeLinecap="round" /></svg>
  ),
  map: (
    <svg viewBox="0 0 28 28"><path d="M10 16C8 11 5.500 9 5.500 5.500a4.500 4.500 0 0 1 9 0C14.500 9 12 11 10 16zM10 3a2.500 2.500 0 1 0 0 5 2.500 2.500 0 0 0 0-5z" fill="currentColor" fillRule="evenodd" /><path d="M5 8L2 7v19l8-2 7 2 9-2V8l-9-2h-2M2 17l8-1 7 1 9-1M10 16v8M17 7v19" fill="none" stroke="currentColor" /></svg>
  ),
};

const Chevron = () => <path d="M2 6l8 8 8-8" fill="none" stroke="currentColor" strokeWidth="1.500" />;

const CloseIcon = () => (
  <svg viewBox="0 0 10 10"><path d="M1 1l8 8M9 1L1 9" stroke="currentColor" /></svg>
);

const menu: { text: string; icon: keyof typeof icons; active?: boolean; sub?: boolean }[] = [
  { text: "统计信息", icon: "dashboard" },
  { text: "商家", icon: "store" },
  { text: "商品", icon: "goods" },
  { text: "送货员", icon: "delivery" },
  { text: "用户", icon: "users" },
  { text: "订单", icon: "order", sub: true },
  { text: "订单热图", icon: "map", active: true },
];

export default function App() {
  return (
    <>
      <GlobalStyle />
      <Page>
        <Sidebar>
          {menu.map((m) => (
            <MenuLink key={m.text} href="#" $active={m.active}>
              {icons[m.icon]}
              <MenuText>{m.text}</MenuText>
              {m.sub && <MenuArrow viewBox="0 0 20 20"><Chevron /></MenuArrow>}
            </MenuLink>
          ))}
        </Sidebar>
        <Main>
          <Header>
            <Burger aria-label="菜单">
              <svg viewBox="0 0 40 32"><path d="M2 4h36M2 16h36M2 28h36" stroke="#000" strokeWidth="4" strokeLinecap="round" /></svg>
            </Burger>
            <Crumbs>
              <Crumb href="#">首页</Crumb>
              <CrumbSlash>/</CrumbSlash>
              <CrumbHere>订单热图</CrumbHere>
            </Crumbs>
            <Tools>
              <Tool aria-label="全屏">
                <svg viewBox="0 0 40 40" fill="currentColor">
                  <path d="M0 2h13l-4 4 6 6-4 4-6-6-5 4zM36 2H23l4 4-6 6 4 4 6-6 5 4zM0 38h13l-4-4 6-6-4-4-6 6-5-4zM36 38H23l4-4-6-6 4-4 6 6 5-4z" />
                </svg>
              </Tool>
              <Tool aria-label="字号">
                <svg viewBox="0 0 40 40" fill="#606266"><path d="M11 0h29v6H29v34h-7V6H11zM0 17h17v6h-6v17H5V23H0z" /></svg>
              </Tool>
              <Tool aria-label="语言">
                <svg viewBox="0 0 40 40">
                  <rect width="40" height="40" rx="4" fill="#606266" />
                  <path d="M5 32l7-18q1-1 2 0l7 18M8 27h10" fill="none" stroke="#fff" strokeWidth="4" strokeLinecap="round" />
                  <path d="M30 8v4M24 12h13M34 12q-2 8-10 11M27 12q2 8 10 11" fill="none" stroke="#fff" strokeWidth="1.500" />
                </svg>
              </Tool>
              <ColorPicker aria-label="主题色">
                <Swatch><svg viewBox="0 0 20 20"><Chevron /></svg></Swatch>
              </ColorPicker>
              <UserMenu aria-label="用户菜单">
                <Avatar viewBox="0 0 80 80">
                  <g fill="#fff">
                    <path d="M35 33C33 27 27 22 29 20c3-2 7 4 9 9-1-6-2-11 0-11 4 0 5 8 4 14q3 3 2 8-1 4-2 8l1 6-2 4q5 1 3 4h-3l-3-4h-8l-2 3q-4 1-3-2l-2-2q-3 0-2-4 2-2 5 0-1-13 5-18z" />
                  </g>
                  <path d="M31 36l13 1-1 2h-3l-1-1-2 1-2-1z" />
                  <path d="M39 40h4" stroke="#f6a3c4" strokeWidth="2" />
                  <path d="M33 48q4-1 5 4 1-5 4-5l2 1 3 2-1 3q-1 5-5 5-7 0-8-5z" />
                  <path d="M45 46L58 35" stroke="#000" strokeWidth="2" />
                  <path d="M54 36l6-2-3 5z" />
                  <circle cx="47" cy="45" r="2.500" fill="#fff" />
                  <path d="M36 43q-2 6 1 8" stroke="#fff" strokeWidth="3" fill="none" strokeLinecap="round" />
                </Avatar>
                <Caret />
              </UserMenu>
            </Tools>
          </Header>
          <Tabs>
            <Tab>
              <a href="#">统计信息</a>
              <TabClose aria-label="关闭统计信息"><CloseIcon /></TabClose>
            </Tab>
            <Tab $active>
              <a href="#">订单热图</a>
              <TabClose aria-label="关闭订单热图"><CloseIcon /></TabClose>
            </Tab>
          </Tabs>
          <Content>
            <PrimaryButton>隐藏热力图</PrimaryButton>
            <HeatMap />
          </Content>
        </Main>
      </Page>
    </>
  );
}
